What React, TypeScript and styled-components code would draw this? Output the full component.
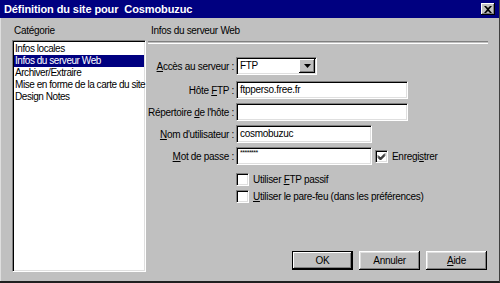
import React from 'react';
import styled, { createGlobalStyle } from 'styled-components';

const GlobalStyle = createGlobalStyle`
  html, body {
    margin: 0;
    padding: 0;
    background: #c0c0c0;
  }
  body {
    font-family: "Liberation Sans", Arial, sans-serif;
    font-size: 10px;
    letter-spacing: -0.3px;
    color: #000;
  }
`;

const Window = styled.div`
  width: 500px;
  height: 283px;
  box-sizing: border-box;
  background: #c0c0c0;
  display: flex;
  flex-direction: column;
  border-right: 1px solid #404040;
  border-bottom: 2px solid #202020;
  box-shadow: inset 1px 0 #dfdfdf;
  overflow: hidden;
`;

const TitleBar = styled.div`
  height: 18px;
  background: #000080;
  color: #fff;
  font-weight: bold;
  font-size: 11px;
  letter-spacing: -0.1px;
  display: flex;
  align-items: center;
  justify-content: space-between;
  padding: 0 4px 0 4px;
  white-space: pre;
`;

const CloseButton = styled.div`
  width: 14px;
  height: 12px;
  background: #c0c0c0;
  box-shadow: inset -1px -1px #000, inset 1px 1px #fff, inset -2px -2px #808080;
  display: flex;
  align-items: center;
  justify-content: center;
`;

const Body = styled.div`
  flex: 1;
  display: grid;
  grid-template-columns: 134px 340px;
  column-gap: 2px;
  padding: 4px 0 0 12px;
`;

const Column = styled.div`
  display: flex;
  flex-direction: column;
`;

const Caption = styled.div`
  height: 13px;
  line-height: 13px;
  padding-left: ${p => p.$indent || 0}px;
  margin-top: 2px;
`;

const ListBox = styled.div`
  margin-top: 3px;
  height: 232px;
  background: #fff;
  border-top: 1px solid #808080;
  border-left: 1px solid #808080;
  border-right: 1px solid #fff;
  border-bottom: 1px solid #fff;
  box-shadow: inset 1px 1px #000, inset -1px -1px #dfdfdf;
  padding: 2px 1px;
  box-sizing: border-box;
`;

const ListItem = styled.div`
  height: 12px;
  line-height: 12px;
  padding-left: 1px;
  white-space: nowrap;
  letter-spacing: -0.45px;
  background: ${p => (p.$selected ? '#000080' : 'transparent')};
  color: ${p => (p.$selected ? '#fff' : '#000')};
`;

const Separator = styled.div`
  margin-top: 4px;
  height: 1px;
  border-top: 1px solid #808080;
  border-bottom: 1px solid #fff;
`;

const Form = styled.div`
  margin-top: 13px;
  display: flex;
  flex-direction: column;
  gap: 4px;
`;

const Row = styled.div`
  display: grid;
  grid-template-columns: 86px auto auto;
  column-gap: 2px;
  align-items: center;
  justify-content: start;
  height: 18px;
  margin-top: ${p => p.$push || 0}px;
`;

const Label = styled.label`
  display: flex;
  justify-content: flex-end;
  white-space: pre;
`;

const Field = styled.div`
  width: ${p => p.$w}px;
  height: 18px;
  box-sizing: border-box;
  background: #fff;
  border-top: 1px solid #808080;
  border-left: 1px solid #808080;
  border-right: 1px solid #fff;
  border-bottom: 1px solid #fff;
  box-shadow: inset 1px 1px #000, inset -1px -1px #dfdfdf;
  padding: 0 3px;
  line-height: 16px;
  display: flex;
  align-items: center;
  justify-content: space-between;
`;

const Stars = styled.span`
  font-size: 7px;
  letter-spacing: -0.5px;
  position: relative;
  top: -3px;
`;

const DropArrow = styled.div`
  width: 16px;
  height: 14px;
  margin-right: -2px;
  background: #c0c0c0;
  box-shadow: inset -1px -1px #000, inset 1px 1px #fff, inset -2px -2px #808080;
  display: flex;
  align-items: center;
  justify-content: center;
`;

const CheckLine = styled.div`
  display: flex;
  align-items: center;
  gap: 4px;
  padding-left: ${p => p.$indent || 0}px;
  height: ${p => p.$h || 15}px;
  white-space: nowrap;
`;

const Box = styled.div`
  width: 13px;
  height: 13px;
  box-sizing: border-box;
  background: #fff;
  border-top: 1px solid #808080;
  border-left: 1px solid #808080;
  border-right: 1px solid #fff;
  border-bottom: 1px solid #fff;
  box-shadow: inset 1px 1px #000, inset -1px -1px #dfdfdf;
  display: flex;
  align-items: center;
  justify-content: center;
`;

const Options = styled.div`
  margin-top: 7px;
  display: flex;
  flex-direction: column;
  gap: 2px;
`;

const Buttons = styled.div`
  margin-top: auto;
  margin-bottom: 11px;
  display: flex;
  justify-content: flex-end;
  gap: 6px;
  padding-right: 1px;
`;

const Button = styled.div`
  width: 61px;
  height: 19px;
  box-sizing: border-box;
  display: flex;
  align-items: center;
  justify-content: center;
  background: #c0c0c0;
  box-shadow: ${p =>
    p.$default
      ? 'inset 0 0 0 1px #000, inset -2px -2px #000, inset 2px 2px #fff, inset -3px -3px #808080'
      : 'inset -1px -1px #000, inset 1px 1px #fff, inset -2px -2px #808080, inset 2px 2px #dfdfdf'};
`;

const Key = styled.span`
  text-decoration: underline;
`;

const Check = () => (
  <svg width="9" height="9" viewBox="0 0 9 9">
    <path d="M1 3.5 L3.5 6 L8 1.5 M1 4.5 L3.5 7 L8 2.5 M1 5.5 L3.5 8 L8 3.5" stroke="#000" strokeWidth="1" fill="none" />
  </svg>
);

const categories = [
  'Infos locales',
  'Infos du serveur Web',
  'Archiver/Extraire',
  'Mise en forme de la carte du site',
  'Design Notes',
];

const App = () => (
  <>
    <GlobalStyle />
    <Window>
      <TitleBar>
        <span>Définition du site pour  Cosmobuzuc</span>
        <CloseButton>
          <svg width="8" height="7" viewBox="0 0 8 7">
            <path d="M0 0 L2 0 L4 2 L6 0 L8 0 L5 3.5 L8 7 L6 7 L4 5 L2 7 L0 7 L3 3.5 Z" fill="#000" />
          </svg>
        </CloseButton>
      </TitleBar>
      <Body>
        <Column>
          <Caption $indent={2}>Catégorie</Caption>
          <ListBox>
            {categories.map((c, i) => (
              <ListItem key={c} $selected={i === 1}>{c}</ListItem>
            ))}
          </ListBox>
        </Column>
        <Column>
          <Caption $indent={3}>Infos du serveur Web</Caption>
          <Separator />
          <Form>
            <Row>
              <Label><span><Key>A</Key>ccès au serveur :</span></Label>
              <Field $w={81}>
                <span>FTP</span>
                <DropArrow>
                  <svg width="7" height="4" viewBox="0 0 7 4">
                    <path d="M0 0 H7 L3.5 4 Z" fill="#000" />
                  </svg>
                </DropArrow>
              </Field>
            </Row>
            <Row $push={2}>
              <Label><span>Hôte <Key>F</Key>TP :</span></Label>
              <Field $w={172}>ftpperso.free.fr</Field>
            </Row>
            <Row>
              <Label><span>Répertoire <Key>d</Key>e l'hôte :</span></Label>
              <Field $w={172} />
            </Row>
            <Row>
              <Label><span><Key>N</Key>om d'utilisateur :</span></Label>
              <Field $w={136}>cosmobuzuc</Field>
            </Row>
            <Row>
              <Label><span><Key>M</Key>ot de passe :</span></Label>
              <Field $w={136}><Stars>********</Stars></Field>
              <CheckLine $indent={1} $h={18}>
                <Box><Check /></Box>
                <span>Enregi<Key>s</Key>trer</span>
              </CheckLine>
            </Row>
          </Form>
          <Options>
            <CheckLine $indent={88}>
              <Box />
              <span>Utiliser <Key>F</Key>TP passif</span>
            </CheckLine>
            <CheckLine $indent={88}>
              <Box />
              <span><Key>U</Key>tiliser le pare-feu (dans les préférences)</span>
            </CheckLine>
          </Options>
          <Buttons>
            <Button $default>OK</Button>
            <Button>Annuler</Button>
            <Button><span><Key>A</Key>ide</span></Button>
          </Buttons>
        </Column>
      </Body>
    </Window>
  </>
);

export default App;
